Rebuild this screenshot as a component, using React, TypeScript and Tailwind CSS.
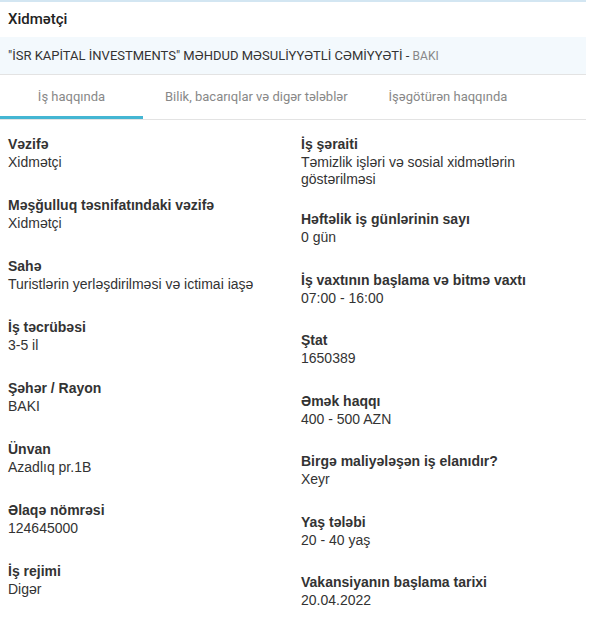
const left = [
  { label: 'Vəzifə', value: 'Xidmətçi' },
  { label: 'Məşğulluq təsnifatındaki vəzifə', value: 'Xidmətçi' },
  { label: 'Sahə', value: 'Turistlərin yerləşdirilməsi və ictimai iaşə' },
  { label: 'İş təcrübəsi', value: '3-5 il' },
  { label: 'Şəhər / Rayon', value: 'BAKI' },
  { label: 'Ünvan', value: 'Azadlıq pr.1B' },
  { label: 'Əlaqə nömrəsi', value: '124645000' },
  { label: 'İş rejimi', value: 'Digər' },
]

const right = [
  { label: 'İş şəraiti', value: 'Təmizlik işləri və sosial xidmətlərin göstərilməsi' },
  { label: 'Həftəlik iş günlərinin sayı', value: '0 gün' },
  { label: 'İş vaxtının başlama və bitmə vaxtı', value: '07:00 - 16:00' },
  { label: 'Ştat', value: '1650389' },
  { label: 'Əmək haqqı', value: '400 - 500 AZN' },
  { label: 'Birgə maliyələşən iş elanıdır?', value: 'Xeyr' },
  { label: 'Yaş tələbi', value: '20 - 40 yaş' },
  { label: 'Vakansiyanın başlama tarixi', value: '20.04.2022' },
]

function Column({ items, tight }: { items: { label: string; value: string }[]; tight?: boolean }) {
  return (
    <div className={`flex flex-col px-2 ${tight ? 'gap-[23.5px]' : 'gap-6'}`}>
      {items.map((it, i) => (
        <div key={it.label} className={`flex flex-col ${tight && i === 0 ? '-mb-[2.5px]' : ''}`}>
          <span className="text-[14px] font-bold leading-[20px] text-[#333]">{it.label}</span>
          <span className="text-[14px] leading-[17px] text-[#333]">{it.value}</span>
        </div>
      ))}
    </div>
  )
}

export default function App() {
  return (
    <div className="min-h-[627px] bg-white">
      <div className="w-[586px] border-t-2 border-[#d3e6f2]" style={{ fontFamily: 'Roboto, "Noto Sans", sans-serif' }}>
        <div className="flex h-[35px] items-center px-2 text-[15px] font-medium text-[#222]">Xidmətçi</div>
        <div className="flex h-[38px] items-center border-b border-[#e3e3e3] bg-[#f3f9fd] px-2 text-[13px] text-[#333]">
          "İSR KAPİTAL İNVESTMENTS" MƏHDUD MƏSULİYYƏTLİ CƏMİYYƏTİ -&nbsp;
          <span className="text-[12px] text-[#888]">BAKI</span>
        </div>
        <div className="flex h-[45px] border-b border-[#e3e3e3] text-[13px] text-[#888]">
          <div className="flex w-[143px] items-center justify-center border-b-[3px] border-[#44b6d3] pt-[3px]">İş haqqında</div>
          <div className="flex items-center px-[22px]">Bilik, bacarıqlar və digər tələblər</div>
          <div className="flex items-center px-[19px]">İşəgötürən haqqında</div>
        </div>
      </div>
      <div
        className="grid w-[586px] grid-cols-2 pt-[14px]"
        style={{ fontFamily: '"Liberation Sans", Arial, sans-serif' }}
      >
        <Column items={left} />
        <Column items={right} tight />
      </div>
    </div>
  )
}
